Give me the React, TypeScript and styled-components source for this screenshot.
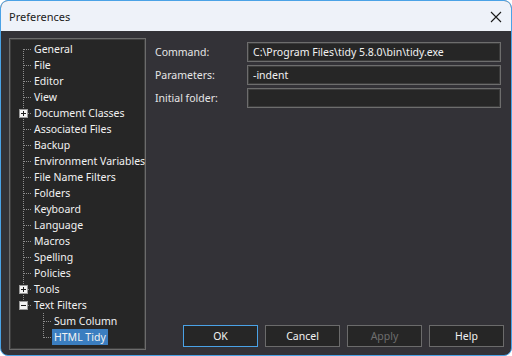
import styled, { createGlobalStyle } from "styled-components";

type Guide = "first" | "middle" | "last" | "none";

interface TreeItem {
  label: string;
  guides: Guide[];
  expander?: "plus" | "minus";
  selected?: boolean;
}

const items: TreeItem[] = [
  { label: "General", guides: ["first"] },
  { label: "File", guides: ["middle"] },
  { label: "Editor", guides: ["middle"] },
  { label: "View", guides: ["middle"] },
  { label: "Document Classes", guides: ["middle"], expander: "plus" },
  { label: "Associated Files", guides: ["middle"] },
  { label: "Backup", guides: ["middle"] },
  { label: "Environment Variables", guides: ["middle"] },
  { label: "File Name Filters", guides: ["middle"] },
  { label: "Folders", guides: ["middle"] },
  { label: "Keyboard", guides: ["middle"] },
  { label: "Language", guides: ["middle"] },
  { label: "Macros", guides: ["middle"] },
  { label: "Spelling", guides: ["middle"] },
  { label: "Policies", guides: ["middle"] },
  { label: "Tools", guides: ["middle"], expander: "plus" },
  { label: "Text Filters", guides: ["last"], expander: "minus" },
  { label: "Sum Column", guides: ["none", "middle"] },
  { label: "HTML Tidy", guides: ["none", "last"], selected: true },
];

const fields = [
  { label: "Command:", value: "C:\\Program Files\\tidy 5.8.0\\bin\\tidy.exe" },
  { label: "Parameters:", value: "-indent" },
  { label: "Initial folder:", value: "" },
];

const GuideCell = ({
  kind,
  expander,
  leaf,
}: {
  kind: Guide;
  expander?: "plus" | "minus";
  leaf: boolean;
}) => {
  const dots = "#8e8e8e";
  let y1 = 0;
  let y2 = 16;
  if (kind === "first") y1 = 8;
  if (kind === "last") y2 = 9;
  return (
    <svg width="20" height="16" viewBox="0 0 20 16" style={{ flexShrink: 0 }}>
      {kind !== "none" && (
        <line x1="11.5" y1={y1} x2="11.5" y2={y2} stroke={dots} strokeDasharray="1 1" />
      )}
      {leaf && kind !== "none" && (
        <line x1={expander ? 16 : 12} y1="8.5" x2="20" y2="8.5" stroke={dots} strokeDasharray="1 1" />
      )}
      {expander && (
        <g>
          <rect x="7.5" y="4.5" width="8" height="8" fill="#f3f3f3" stroke="#9a9a9a" />
          <line x1="9" y1="8.5" x2="14" y2="8.5" stroke="#1c1c1c" />
          {expander === "plus" && <line x1="11.5" y1="6" x2="11.5" y2="11" stroke="#1c1c1c" />}
        </g>
      )}
    </svg>
  );
};

export default function App() {
  return (
    <>
      <GlobalStyle />
      <Window>
        <TitleBar>
          <Title>Preferences</Title>
          <CloseButton>
            <svg width="12" height="12" viewBox="0 0 12 12">
              <path d="M1 1L11 11M11 1L1 11" stroke="#1a1a1a" strokeWidth="1.1" />
            </svg>
          </CloseButton>
        </TitleBar>
        <Body>
          <TreePanel>
            {items.map((it) => (
              <TreeRow key={it.label}>
                {it.guides.map((g, i) => (
                  <GuideCell
                    key={i}
                    kind={g}
                    leaf={i === it.guides.length - 1}
                    expander={i === it.guides.length - 1 ? it.expander : undefined}
                  />
                ))}
                <TreeLabel $selected={!!it.selected}>{it.label}</TreeLabel>
              </TreeRow>
            ))}
          </TreePanel>
          <RightPane>
            <Form>
              {fields.map((f) => (
                <FieldRow key={f.label}>
                  <FieldLabel>{f.label}</FieldLabel>
                  <TextBox>{f.value}</TextBox>
                </FieldRow>
              ))}
            </Form>
            <ButtonRow>
              <Button $focused>OK</Button>
              <Button>Cancel</Button>
              <Button $disabled>Apply</Button>
              <Button>Help</Button>
            </ButtonRow>
          </RightPane>
        </Body>
      </Window>
    </>
  );
}

const GlobalStyle = createGlobalStyle`
  html, body {
    margin: 0;
    padding: 0;
    background: #ffffff;
  }
  body {
    font-family: "Segoe UI", "Noto Sans", sans-serif;
    font-size: 10.5px;
  }
`;

const Window = styled.div`
  width: 512px;
  height: 356px;
  box-sizing: border-box;
  border: 1px solid #4aa2e6;
  border-radius: 8px;
  overflow: hidden;
  display: flex;
  flex-direction: column;
  background: #333237;
`;

const TitleBar = styled.div`
  height: 30px;
  flex-shrink: 0;
  background: #eef2f9;
  display: flex;
  align-items: center;
  justify-content: space-between;
  padding: 0 8px 0 8px;
`;

const Title = styled.div`
  color: #1b1b1b;
  font-size: 11px;
  margin-top: 1px;
`;

const CloseButton = styled.div`
  width: 12px;
  height: 12px;
  display: flex;
  margin-right: 1px;
  margin-top: 1px;
`;

const Body = styled.div`
  flex: 1;
  display: flex;
  padding: 7px 7px 5px 8px;
  min-height: 0;
`;

const TreePanel = styled.div`
  width: 137px;
  box-sizing: border-box;
  background: #262626;
  border: 1px solid #6b6b6b;
  box-shadow: inset 0 0 0 1px #3e3e3e;
  padding: 2px 0 0 2px;
  display: flex;
  flex-direction: column;
  overflow: hidden;
`;

const TreeRow = styled.div`
  height: 16px;
  display: flex;
  align-items: center;
`;

const TreeLabel = styled.span<{ $selected: boolean }>`
  height: 16px;
  line-height: 16px;
  padding: 0 2px;
  white-space: nowrap;
  color: #f2f2f2;
  background: ${(p) => (p.$selected ? "#3b7ec0" : "transparent")};
`;

const RightPane = styled.div`
  flex: 1;
  display: flex;
  flex-direction: column;
  margin-left: 9px;
`;

const Form = styled.div`
  display: flex;
  flex-direction: column;
  gap: 3px;
  margin-top: 4px;
  margin-right: 3px;
`;

const FieldRow = styled.div`
  display: flex;
  align-items: center;
  height: 20px;
`;

const FieldLabel = styled.div`
  width: 92px;
  flex-shrink: 0;
  color: #e6e6e6;
`;

const TextBox = styled.div`
  flex: 1;
  height: 20px;
  box-sizing: border-box;
  background: #262626;
  border: 1px solid #6d6d6d;
  box-shadow: inset 0 0 0 1px #3c3c3c;
  color: #f2f2f2;
  padding: 0 5px;
  line-height: 18px;
  white-space: nowrap;
  overflow: hidden;
`;

const ButtonRow = styled.div`
  margin-top: auto;
  margin-bottom: 3px;
  display: flex;
  justify-content: flex-end;
  gap: 7px;
`;

const Button = styled.div<{ $focused?: boolean; $disabled?: boolean }>`
  width: 75px;
  height: 22px;
  box-sizing: border-box;
  background: #262626;
  border: 1px solid ${(p) => (p.$focused ? "#4aa2e6" : "#6b6b6b")};
  color: ${(p) => (p.$disabled ? "#6e6e6e" : "#f2f2f2")};
  display: flex;
  align-items: center;
  justify-content: center;
`;
